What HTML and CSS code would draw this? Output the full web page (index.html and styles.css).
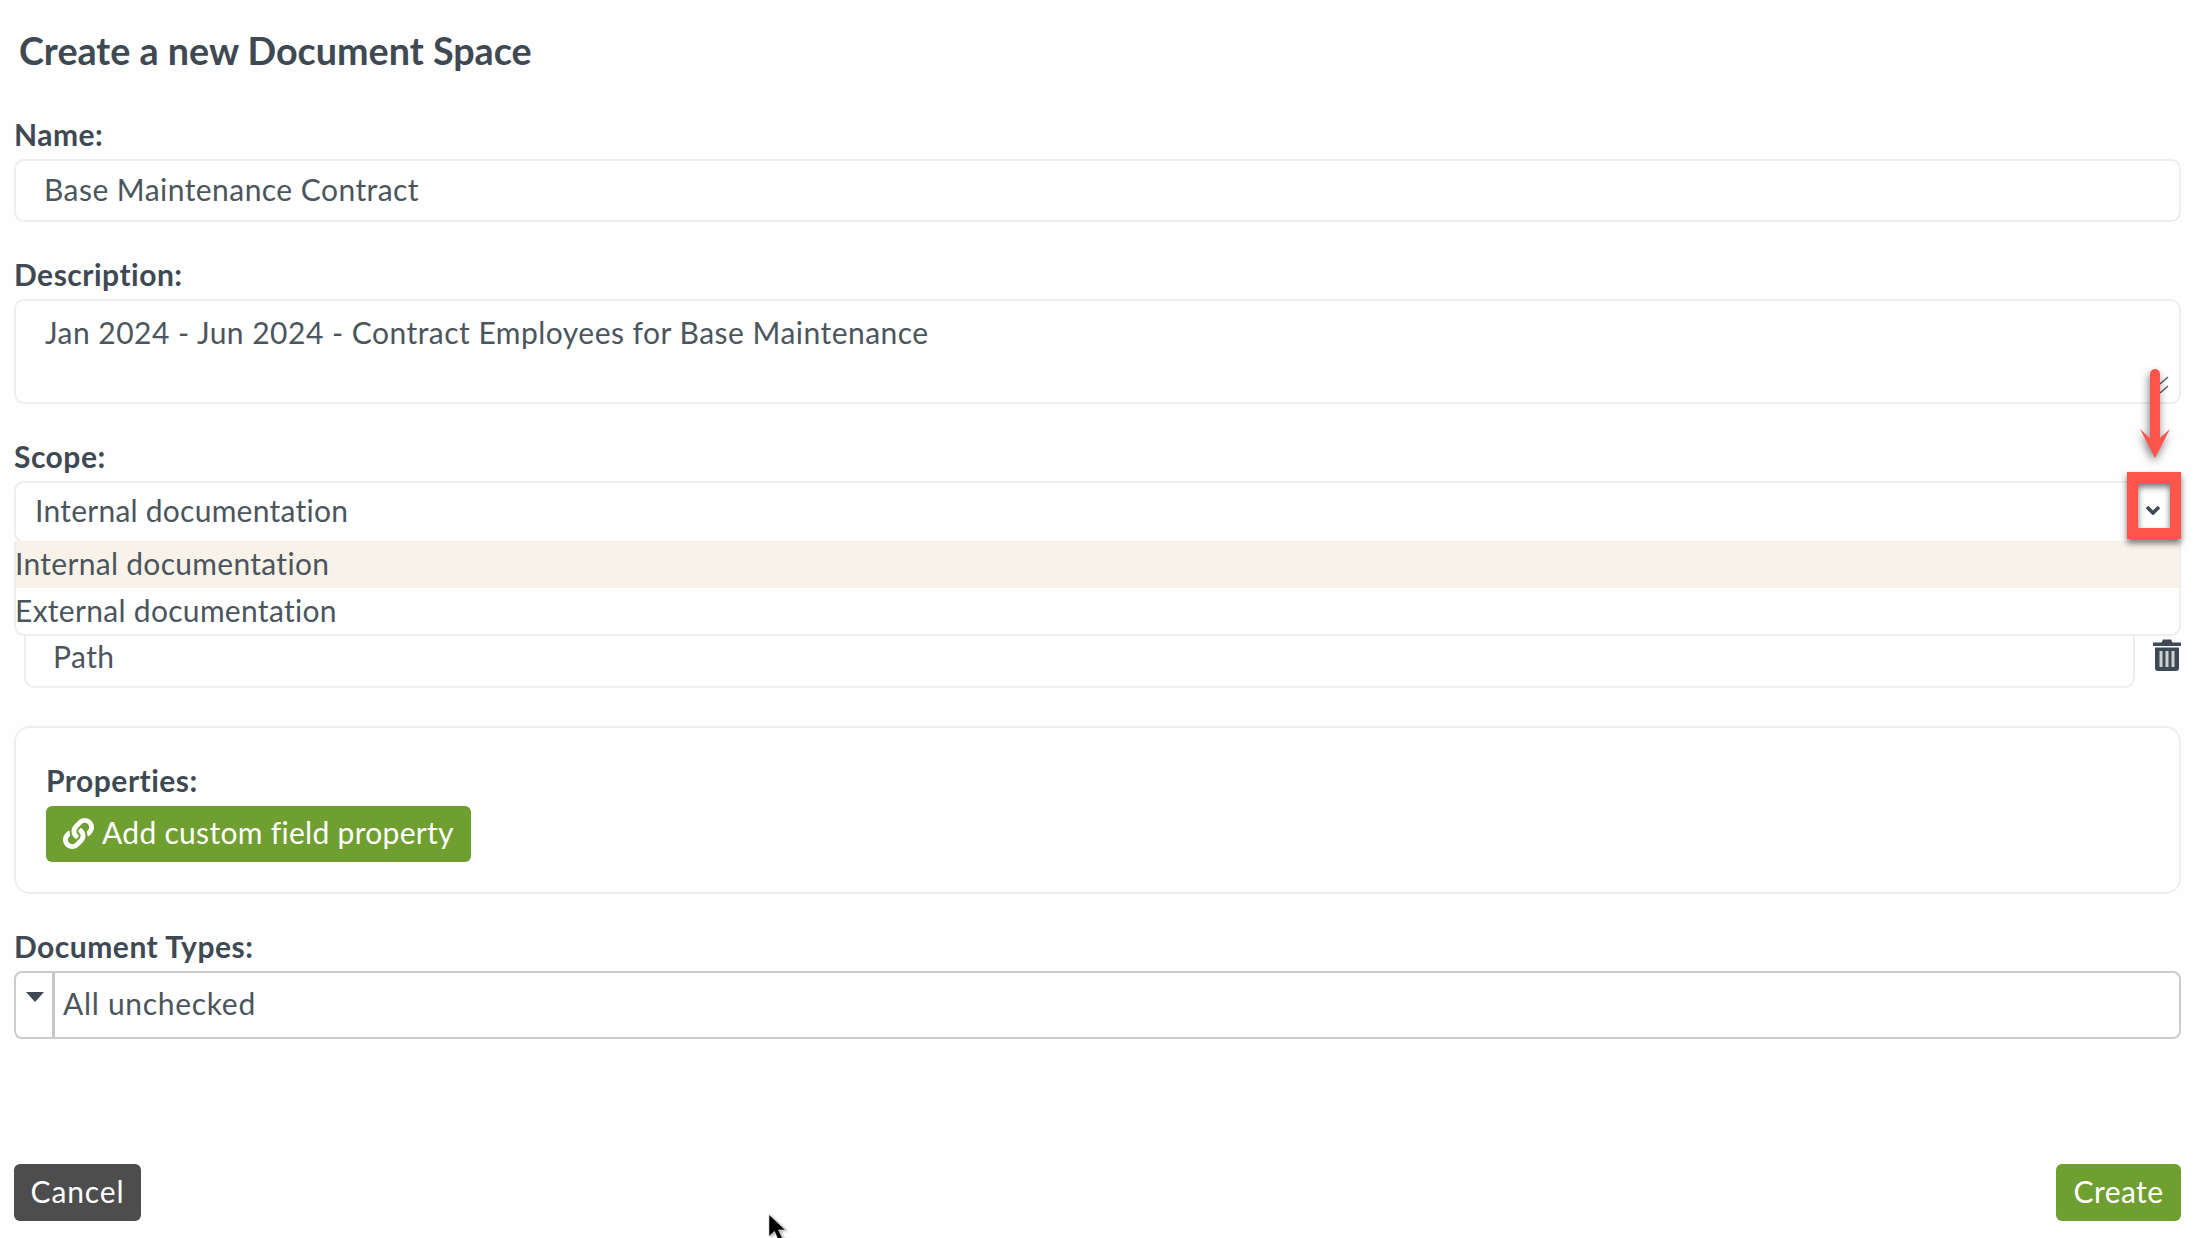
FILE: index.html
```html
<!DOCTYPE html>
<html lang="en">
<head>
<meta charset="utf-8">
<title>Create a new Document Space</title>
<link rel="stylesheet" href="styles.css">
</head>
<body>
<main class="page">
  <h1 class="title">Create a new Document Space</h1>

  <section class="group group-name">
    <div class="label">Name:</div>
    <div class="input">Base Maintenance Contract</div>
  </section>

  <section class="group group-desc">
    <div class="label">Description:</div>
    <div class="input textarea">Jan 2024 - Jun 2024 - Contract Employees for Base Maintenance
      <svg class="resize" viewBox="0 0 10 18" aria-hidden="true"><path d="M1 8 9 1M1 17 9 10" fill="none" stroke="#5b646c" stroke-width="1.6"/></svg>
    </div>
  </section>

  <section class="group group-scope">
    <div class="label">Scope:</div>
    <div class="select">
      <div class="select-box">Internal documentation
        <svg class="chevron" viewBox="0 0 16 10" aria-hidden="true"><path d="M2 2 8 8 14 2" fill="none" stroke="#3e4953" stroke-width="3.6"/></svg>
      </div>
      <ul class="menu">
        <li class="option active">Internal documentation</li>
        <li class="option">External documentation</li>
      </ul>
    </div>
  </section>

  <section class="path-row">
    <div class="input path">Path</div>
    <svg class="trash" viewBox="0 0 28 32" aria-hidden="true">
      <path fill="#3e4953" d="M0 3.500h8.500L10 .5h8l1.500 3H28V7H0zM2 8.500h24V29a3 3 0 0 1-3 3H5a3 3 0 0 1-3-3z"/>
      <path fill="#fff" opacity=".75" d="M6.500 12h3v16h-3zM12.500 12h3v16h-3zM18.500 12h3v16h-3z"/>
    </svg>
  </section>

  <section class="card">
    <div class="label">Properties:</div>
    <button class="btn btn-green btn-add" type="button">
      <svg class="link-icon" viewBox="0 0 512 512" aria-hidden="true"><path fill="#fff" d="M326.612 185.391c59.747 59.809 58.927 155.698.36 214.59-.11.12-.24.25-.36.37l-67.2 67.2c-59.27 59.27-155.699 59.262-214.96 0-59.27-59.26-59.27-155.7 0-214.96l37.106-37.106c9.84-9.84 26.786-3.3 27.294 10.606.648 17.722 3.826 35.527 9.69 52.721 1.986 5.822.567 12.262-3.783 16.612l-13.087 13.087c-28.026 28.026-28.905 73.66-1.155 101.96 28.024 28.579 74.086 28.749 102.325.51l67.2-67.19c28.191-28.191 28.073-73.757 0-101.83-3.701-3.694-7.429-6.564-10.341-8.569a16.037 16.037 0 0 1-6.947-12.606c-.396-10.567 3.348-21.456 11.698-29.806l21.054-21.055c5.521-5.521 14.182-6.199 20.584-1.731a152.482 152.482 0 0 1 20.522 17.197zM467.547 44.449c-59.261-59.262-155.69-59.27-214.96 0l-67.2 67.2c-.12.12-.25.25-.36.37-58.566 58.892-59.387 154.781.36 214.59a152.454 152.454 0 0 0 20.521 17.196c6.402 4.468 15.064 3.789 20.584-1.731l21.054-21.055c8.35-8.35 12.094-19.239 11.698-29.806a16.037 16.037 0 0 0-6.947-12.606c-2.912-2.005-6.64-4.875-10.341-8.569-28.073-28.073-28.191-73.639 0-101.83l67.2-67.19c28.239-28.239 74.3-28.069 102.325.51 27.75 28.3 26.872 73.934-1.155 101.96l-13.087 13.087c-4.35 4.35-5.769 10.79-3.783 16.612 5.864 17.194 9.042 34.999 9.69 52.721.509 13.906 17.454 20.446 27.294 10.606l37.106-37.106c59.271-59.259 59.271-155.699.001-214.959z"/></svg>
      <span>Add custom field property</span>
    </button>
  </section>

  <section class="group group-types">
    <div class="label">Document Types:</div>
    <div class="multi">
      <div class="multi-toggle"><span class="caret"></span></div>
      <div class="multi-value">All unchecked</div>
    </div>
  </section>

  <footer class="footer">
    <button class="btn btn-dark" type="button">Cancel</button>
    <button class="btn btn-green btn-create" type="button">Create</button>
  </footer>

  <svg class="note-arrow" viewBox="0 0 30 90" aria-hidden="true">
    <path fill="#fd544c" d="M10 5a5 5 0 0 1 10 0v64l10-9-15 29L0 60l10 9z"/>
  </svg>
  <div class="note-box"></div>
  <svg class="cursor" viewBox="0 0 24 34" aria-hidden="true">
    <path fill="#000" stroke="#fff" stroke-width=".6" d="M1 0v24l6-5.500 4.500 10 4.500-2-4.500-9.500H19z"/>
  </svg>
</main>
</body>
</html>
```
FILE: styles.css
```css
* { box-sizing: border-box; }
html, body { margin: 0; padding: 0; height: 100%; background: #fefefe; overflow: hidden; }
body { font-family: Lato, "Open Sans", sans-serif; color: #4b555e; font-size: 30px; letter-spacing: .45px; }
.page { position: relative; height: 1238px; padding: 29px 15px 0 14px; }
.title { margin: 0 0 0 5px; font-size: 37.700px; line-height: 44px; font-weight: 700; color: #3e4953; letter-spacing: 0; }
.label { font-weight: 700; font-size: 30px; line-height: 34px; color: #3e4953; margin-bottom: 8px; letter-spacing: .5px; }
.group-name { margin-top: 44px; }
.group-desc { margin-top: 35px; }
.group-scope { margin-top: 35px; }
.group-types { margin-top: 35px; }
.group-types .label { margin-bottom: 8px; }
.input { position: relative; height: 63px; line-height: 56px; padding: 0 28px; border: 2px solid #eeeeee; border-radius: 10px; background: #fff; }
.textarea { height: 105px; line-height: 62px; padding-left: 29px; letter-spacing: .48px; }
.resize { position: absolute; right: 10px; bottom: 8px; width: 10px; height: 18px; }
.select { position: relative; letter-spacing: .3px; }
.select-box { position: relative; height: 62px; padding-left: 19px; line-height: 54px; letter-spacing: .25px; border: 2px solid #eeeeee; border-radius: 10px; background: #fff; }
.chevron { position: absolute; right: 18px; top: 22px; width: 16px; height: 10px; }
.menu { position: absolute; left: 0; right: 0; top: 60px; margin: 0; padding: 0; list-style: none; background: #fff; border: 2px solid #eeeeee; border-top: 0; border-radius: 0 0 10px 10px; z-index: 2; }
.option { height: 46.500px; line-height: 45px; text-indent: -1px; }
.option.active { background: #f9f2e9; }
.path-row { display: flex; align-items: flex-start; margin: 82px 0 0 10px; }
.path { flex: 1; line-height: 58px; padding-left: 27px; }
.trash { width: 28px; height: 32px; margin: 14px 0 0 18px; flex: none; }
.card { margin-top: 38px; height: 168px; padding: 35px 30px 0; border: 2px solid #eeeeee; border-radius: 16px; background: #fff; }
.card .label { margin-bottom: 9px; }
.btn { display: inline-flex; align-items: center; justify-content: center; height: 57px; padding: 0 0 3px; border: 0; border-radius: 6px; font: inherit; letter-spacing: inherit; color: #fff; white-space: nowrap; }
.btn-green { background: #6f9f30; }
.btn-dark { background: #4d4d4d; width: 127px; letter-spacing: .9px; }
.btn-create { width: 125px; }
.btn-add { width: 425px; height: 56px; justify-content: flex-start; padding: 0 0 5px 17px; letter-spacing: .3px; }
.link-icon { width: 31px; height: 31px; margin: 3px 8px 0 0; flex: none; }
.multi { display: flex; height: 68px; border: 2px solid #cccccc; border-radius: 8px; background: #fff; }
.multi-toggle { width: 39px; border-right: 3px solid #c8c8c8; flex: none; padding: 19px 0 0 10px; }
.caret { display: block; width: 0; height: 0; border-left: 9.500px solid transparent; border-right: 9.500px solid transparent; border-top: 10px solid #3e4953; }
.multi-value { padding-left: 8px; line-height: 61px; letter-spacing: .7px; }
.footer { display: flex; justify-content: space-between; margin-top: 125px; }
.note-arrow { position: absolute; left: 2140px; top: 369px; width: 30px; height: 90px; filter: drop-shadow(-1px 4px 4px rgba(0,0,0,.5)); z-index: 3; }
.note-box { position: absolute; left: 2127px; top: 472px; width: 54px; height: 67px; border: 11px solid #fd544c; filter: drop-shadow(0 4px 3px rgba(0,0,0,.55)); z-index: 3; }
.cursor { position: absolute; left: 768px; top: 1214px; width: 22px; height: 32px; filter: drop-shadow(2px 1px 1px rgba(0,0,0,.3)); z-index: 3; }
```
